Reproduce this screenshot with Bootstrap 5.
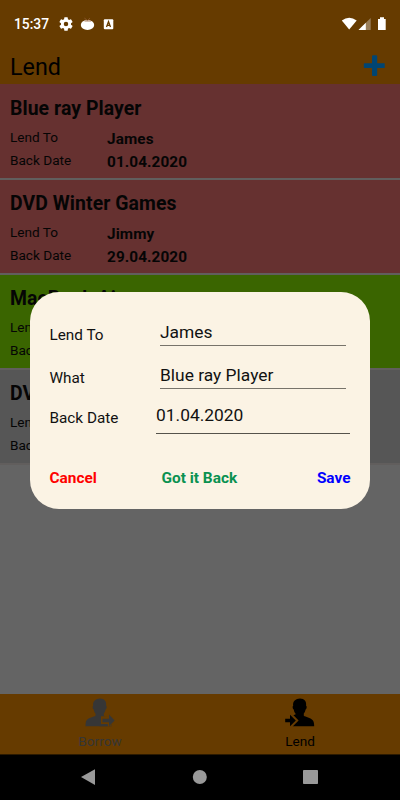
<!DOCTYPE html>
<html lang="en">
<head>
<meta charset="utf-8">
<meta name="viewport" content="width=device-width, initial-scale=1">
<title>Lend</title>
<link href="https://cdn.jsdelivr.net/npm/bootstrap@5.3.0/dist/css/bootstrap.min.css" rel="stylesheet">
<style>
body{font-family:Roboto,sans-serif;color:#050505;background:#646464;height:800px;overflow:hidden}
.screen{width:400px;height:800px}
.top-area{height:84px;background:#663b00}
.status{height:47px;padding:1px 14px 0;color:#fff;font-size:13.8px;font-weight:500}
.app-title{font-size:23.3px;line-height:38px;color:#000;padding-top:1px}
.title-row{height:38px;padding:0 14px 0 10px}
.loan{height:95px;padding:11px 10px 0;border-bottom:2px solid #615e5d}
.loan:first-child{height:96px;padding-top:12px}
.loan h2{font-size:19.4px;line-height:25px;font-weight:700;margin:0 0 6px;letter-spacing:.08px}
.loan .fields{grid-template-columns:97px 1fr;grid-auto-rows:22.5px;font-size:13.6px;line-height:21.5px}
.loan .fields b{font-size:15.3px;letter-spacing:.1px;line-height:22.5px;padding-top:1px}
.late{background:#663130}
.ontime{background:#3a6500}
.idle{background:#565656}
.tabs{height:61px;background:#663b00;border-bottom:1px solid #2c1a00;font-size:13.6px;line-height:18px}
.tabs .tab{padding-top:4px}
.tabs svg{display:block;margin-bottom:4px}
.sysnav{height:45px;background:#000}
.dialog-box{left:30px;top:292px;width:340px;height:217px;border-radius:29px;background:#fbf3e4;padding:22px 20px 0 19.5px;font-size:15.3px;color:#111}
.dialog-box .lab{width:110.5px;height:43px;line-height:42px}
.entry{font-size:17.4px;border-bottom:1px solid #77736a;line-height:26px;width:186px;height:27px;margin-top:5px}
.dialog-box .date-lab{width:106.5px;line-height:37px}
.entry.date-entry{width:194px;height:32px;margin-top:2px;padding-top:2px;line-height:23px;border-bottom-color:#55524b}
.acts{font-size:15.4px;font-weight:700;line-height:20px;margin-top:25px;width:301px}
</style>
<script src="https://cdn.jsdelivr.net/npm/bootstrap@5.3.0/dist/js/bootstrap.bundle.min.js"></script>
</head>
<body>
<div class="screen position-relative d-flex flex-column">
  <header class="top-area">
    <div class="status d-flex align-items-center">
      <span style="width:34px">15:37</span>
      <svg style="margin-left:11px" width="14" height="14" viewBox="2 2 20 20" fill="#fff"><path d="M19.14 12.94c.04-.3.06-.61.06-.94s-.02-.64-.07-.94l2.03-1.58a.49.49 0 0 0 .12-.61l-1.92-3.32a.49.49 0 0 0-.59-.22l-2.39.96a7 7 0 0 0-1.62-.94l-.36-2.54A.48.48 0 0 0 13.92 2.4h-3.84a.48.48 0 0 0-.47.41l-.36 2.54c-.59.24-1.13.57-1.62.94l-2.39-.96a.48.48 0 0 0-.59.22L2.74 8.87a.48.48 0 0 0 .12.61l2.03 1.58a7 7 0 0 0 0 1.88l-2.03 1.58a.49.49 0 0 0-.12.61l1.92 3.32c.12.22.37.29.59.22l2.39-.96c.5.38 1.03.7 1.62.94l.36 2.54c.05.24.24.41.48.41h3.84c.24 0 .44-.17.47-.41l.36-2.54a7 7 0 0 0 1.62-.94l2.39.96c.22.08.47 0 .59-.22l1.92-3.32a.48.48 0 0 0-.12-.61zM12 15.2a3.2 3.2 0 1 1 0-6.4 3.2 3.2 0 0 1 0 6.4z"/></svg>
      <svg style="margin-left:7px" width="15" height="14" viewBox="0 0 15 14"><ellipse cx="7.500" cy="8" rx="6.700" ry="4.900" fill="#fff"/><path d="M4.500 1.200 7.500 3.600 10 1.200M7.500 4h3.500M7.500 4H4.500" stroke="#96603c" fill="none" stroke-width=".8"/></svg>
      <svg style="margin-left:8px" width="11" height="11" viewBox="0 0 11 11"><rect x=".8" y=".3" width="9.500" height="10" rx="1" fill="#fff"/><path d="M3.500 8 5.500 2.700 7.500 8M4.200 6.300h2.600" fill="none" stroke="#663b00" stroke-width="1.300"/></svg>
      <svg class="ms-auto" width="46" height="16" viewBox="0 0 46 16"><path d="M1.800 4.600Q9.200-1 16.700 4.600L9.200 13.500z" fill="#fff"/><path d="M30.700 2v12H18.500z" fill="#9a7f5b"/><path d="M25.800 6.800V14h-7.300z" fill="#fff"/><path d="M38 3h2V1.300h4V3h1.700v11H38z" fill="#fff"/></svg>
    </div>
    <div class="title-row d-flex align-items-center justify-content-between">
      <span class="app-title">Lend</span>
      <svg width="23" height="22" viewBox="0 0 23 22"><path d="M9 1.300q0-1 1-1h3.200q1 0 1 1v6.900h7.500v4.800h-7.500v6.900q0 1-1 1H10q-1 0-1-1V13H1.500q-.7 0-.7-1V9.200q0-1 .7-1H9z" fill="#004572"/></svg>
    </div>
  </header>
  <main class="flex-grow-1">
    <section class="loan late"><h2>Blue ray Player</h2><div class="fields d-grid"><span>Lend To</span><b>James</b><span>Back Date</span><b>01.04.2020</b></div></section>
    <section class="loan late"><h2>DVD Winter Games</h2><div class="fields d-grid"><span>Lend To</span><b>Jimmy</b><span>Back Date</span><b>29.04.2020</b></div></section>
    <section class="loan ontime"><h2>MacBook Air</h2><div class="fields d-grid"><span>Lend To</span><b></b><span>Back Date</span><b></b></div></section>
    <section class="loan idle"><h2>DVD</h2><div class="fields d-grid"><span>Lend To</span><b></b><span>Back Date</span><b></b></div></section>
  </main>
  <nav class="tabs d-flex">
    <div class="tab w-50 d-flex flex-column align-items-center" style="color:#363636">
      <svg width="32" height="30" viewBox="0 0 32 30"><path fill="#363636" d="M16 .5c4.400 0 6.700 3 6.100 7.200.9.200.8 3-.5 3.800-.4 2-1 3.100-1.800 4v2.300c1.800 1.200 6.200 2 7.700 4v6.400H1.500c0-2.700.3-5 1.300-6.200 1.800-2.200 7-3 8.700-4.200v-2.300c-.9-.9-1.400-2-1.800-4-1.200-.8-1.400-3.600-.5-3.800C8.400 3.500 11.800.5 16 .5z"/><path fill="#663b00" d="M17 18.200h7.300v-3.500l7.200 7.800-5.300 5.700H24V26.500h-7z"/><path fill="#363636" d="M18.500 20.800H25v-4.300l5.600 6-5.600 5.700v-4h-6.500z"/><path fill="#363636" d="M15.500 26h8v2.200h-8z"/></svg>
      <span>Borrow</span>
    </div>
    <div class="tab w-50 d-flex flex-column align-items-center text-black">
      <svg width="32" height="30" viewBox="0 0 32 30"><path d="M16 .5c4.400 0 6.700 3 6.100 7.200.9.200.8 3-.5 3.800-.4 2-1 3.100-1.800 4v2.300c1.800 1.200 6.700 2 8.700 4.200 1.200 1.200 1.700 3.500 1.700 6.200H8.500L13.500 22.300 8 17.500l3.500-.9v-1.100c-.9-.9-1.400-2-1.800-4-1.200-.8-1.400-3.600-.5-3.800C8.400 3.500 11.800.5 16 .5z"/><path d="M7 15.800 13.500 22.500 7 29" fill="none" stroke="#663b00" stroke-width="1.600"/><path d="M1.200 20.700H6v-4l5.800 5.800L6 28.200v-4H1.200z"/></svg>
      <span>Lend</span>
    </div>
  </nav>
  <footer class="sysnav">
    <svg class="d-block" width="400" height="45" viewBox="0 0 400 45" fill="#999"><path d="M81 22 95 14.300v15.600z"/><circle cx="199.800" cy="22" r="7"/><rect x="303" y="15" width="15" height="14" rx=".8"/></svg>
  </footer>
  <div class="dialog-box position-absolute" role="dialog">
    <div class="d-flex"><div class="lab">Lend To</div><div class="entry">James</div></div>
    <div class="d-flex"><div class="lab">What</div><div class="entry">Blue ray Player</div></div>
    <div class="d-flex"><div class="lab date-lab">Back Date</div><div class="entry date-entry">01.04.2020</div></div>
    <div class="acts d-flex"><span style="color:#f00;width:112px">Cancel</span><span style="color:#0a9150">Got it Back</span><span class="ms-auto" style="color:#00f">Save</span></div>
  </div>
</div>
</body>
</html>
